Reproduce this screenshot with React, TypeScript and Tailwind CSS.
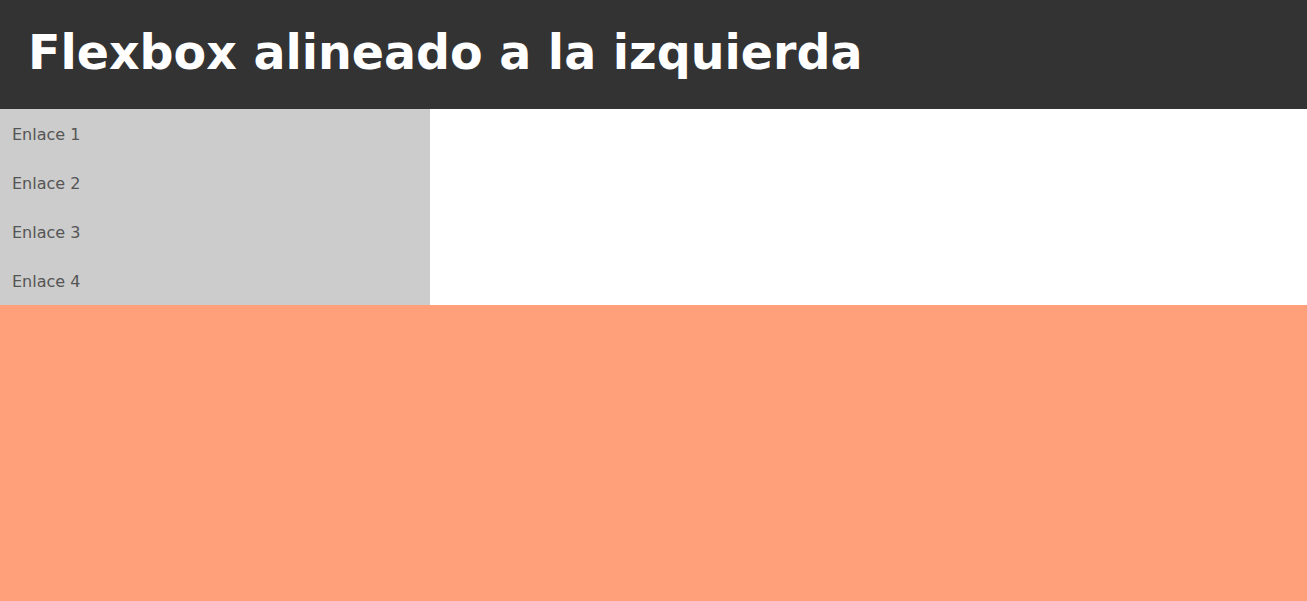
const links = ["Enlace 1", "Enlace 2", "Enlace 3", "Enlace 4"];

export default function App() {
  return (
    <div className="flex min-h-screen flex-col bg-[#ffa07a] font-['DejaVu_Sans',Verdana,sans-serif]">
      <header className="flex h-[109px] items-center bg-[#333333] px-[28px] pb-[3px]">
        <h1 className="text-[47.5px] font-bold leading-none text-white">Flexbox alineado a la izquierda</h1>
      </header>
      <div className="flex bg-white">
        <nav className="flex w-[430px] flex-col bg-[#cccccc]">
          {links.map((link) => (
            <a key={link} href="#" className="flex h-[49px] items-center px-3 pt-[2px] text-[16px] text-[#555555]">
              {link}
            </a>
          ))}
        </nav>
      </div>
    </div>
  );
}
